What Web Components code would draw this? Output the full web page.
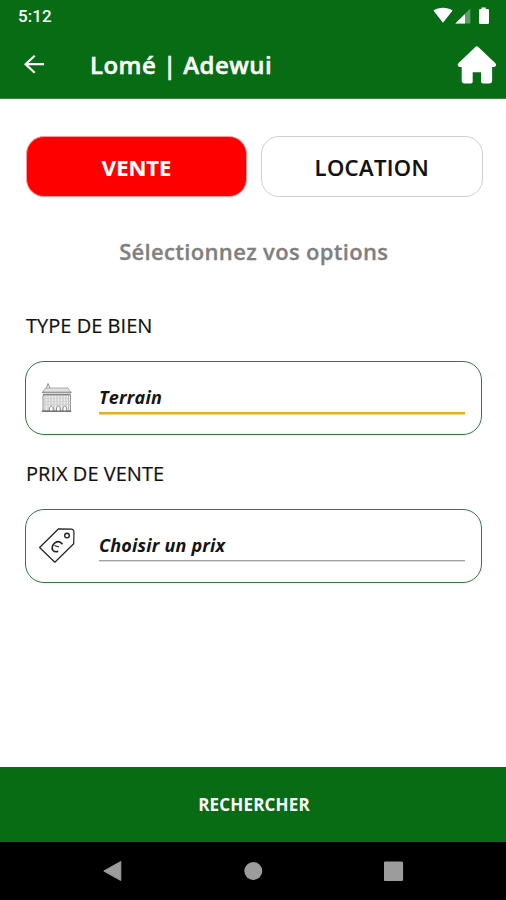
<!DOCTYPE html>
<html lang="fr">
<head>
<meta charset="utf-8">
<title>Lomé | Adewui</title>
<style>
  html, body { margin: 0; height: 100%; background: #fff; }
</style>
</head>
<body>
<property-search></property-search>

<script>
function define(name, html) {
  const template = document.createElement('template');
  template.innerHTML = html;
  customElements.define(name, class extends HTMLElement {
    constructor() {
      super();
      this.attachShadow({ mode: 'open' }).append(template.content.cloneNode(true));
    }
  });
}

define('status-bar', `
<style>
  :host { display: flex; height: 32px; box-sizing: border-box; padding: 0 16px 0 18px; justify-content: space-between; align-items: center;
    font: 500 17px/32px Roboto, sans-serif; color: #fff; }
  span { letter-spacing: .1px; }
  svg { display: block; }
</style>
<span>5:12</span>
<svg width="57" height="18" viewBox="433 6 57 18" fill="#fff">
  <path d="M433.4 9.500C438.8 5.900 447.2 5.900 452.6 9.500L443 21.800Z"/>
  <path d="M455.300 22.600L470.300 7.600V22.600Z" fill-opacity=".35"/>
  <path d="M455.300 22.600L465 12.900V22.600Z"/>
  <path d="M481.400 6.500h4.400v1.600h1.900q1.300 0 1.300 1.300v12.300q0 1.300-1.300 1.300h-7.400q-1.300 0-1.300-1.300V9.400q0-1.300 1.300-1.300h1.100z"/>
</svg>`);

define('app-bar', `
<style>
  :host { display: grid; grid-template-columns: 66px 1fr 40px; height: 66px; align-items: center; padding: 0 9px 0 24px; color: #fff; }
  h1 { margin: 0; font: 600 24px/32px "Open Sans", sans-serif; letter-spacing: .45px; white-space: nowrap; -webkit-text-stroke: .5px #fff; }
  svg { display: block; }
</style>
<svg width="22" height="20" viewBox="0 0 22 20" fill="none" stroke="#fff" stroke-width="2.200"><path d="M20 9.200H1.800M10.700.8L1.600 9.200L10.700 17.800"/></svg>
<h1><slot></slot></h1>
<svg width="40" height="40" viewBox="457 45 40 40" fill="#fff"><path d="M475.600 46.700q1.200-1 2.400 0l17.200 16.200q2.200 2.900-.7 4.100h-2.400v13.500q0 3-3 3h-6.200q-1.800 0-1.800-1.800v-9.400h-8.400v9.400q0 1.800-1.800 1.800h-6.200q-3 0-3-3V67h-2.400q-2.900-1.200-.7-4.100z"/></svg>`);

define('choice-button', `
<style>
  :host { display: flex; flex: 1; box-sizing: border-box; height: 61px; align-items: center; justify-content: center; padding-top: 1px;
    border: 1px solid #d0d0d0; border-radius: 18px; background: #fff; color: #111; font: 600 22px/30px "Open Sans", sans-serif; }
  :host([selected]) { background: #f00; color: #fff; border-color: #ff9a9a; font-weight: 700; }
  :host([selected]) span { letter-spacing: 0; }
  span { letter-spacing: .4px; -webkit-text-stroke: .2px currentColor; }
</style>
<span><slot></slot></span>`);

define('option-field', `
<style>
  :host { display: block; }
  label { display: block; font: 400 20px/26px "Open Sans", sans-serif; color: #111; letter-spacing: .03px; -webkit-text-stroke: .2px #111; }
  .box { display: flex; box-sizing: border-box; height: 74px; margin-top: 22px; padding: 0 16px 0 10px; border: 1px solid #2f7a3a; border-radius: 19px; align-items: center; }
  .icon { width: 63px; }
  .value { flex: 1; box-sizing: border-box; height: 34px; padding-top: 5px; font: italic 700 18px/26px "Open Sans", sans-serif; letter-spacing: .19px;
    color: #151515; border-bottom: 1.500px solid #a2a2a2; box-shadow: 0 1px #ddd; transform: translateY(-2px); }
  :host([active]) .value { height: 36px; padding-top: 6px; border-bottom: 2px solid #e9ad20; box-shadow: 0 1px #f4d58a; }
</style>
<label><slot name="label"></slot></label>
<div class="box"><div class="icon"><slot name="icon"></slot></div><div class="value"><slot></slot></div></div>`);

define('house-icon', `
<style>:host, svg { display: block; }</style>
<svg width="42" height="36" viewBox="36 380 42 36" fill="none" stroke="#777" stroke-width=".8">
  <path d="M45.500 388H68L71 393H42.500Z" fill="#e2e2e2" stroke="#999"/>
  <path d="M42 392.200H71.500M43 394.500H70.500" stroke="#777"/>
  <path d="M46.500 388L48 383.500L50 388" stroke="#777"/>
  <path d="M43 395h27.500v16H43z" fill="#eee"/>
  <path d="M45 395v16M48 395v16M51 395v16M54 395v16M57 395v16M60 395v16M63 395v16M66 395v16M68.500 395v16" stroke="#aaa" stroke-width=".7"/>
  <path d="M43 398.500h27.500M43 401.500h27.500M43 404.500h27.500" stroke="#ccc" stroke-width=".7"/>
  <path d="M49.500 411v-3.500q1.800-3 3.600 0v3.500M56.500 411v-3.500q1.800-3 3.600 0v3.500M63 411v-3.500q1.800-3 3.600 0v3.500" fill="#fff" stroke="#777"/>
  <path d="M41.800 411.200h29.500" stroke="#666" stroke-width="1.300"/>
</svg>`);

define('price-icon', `
<style>:host, svg { display: block; }</style>
<svg width="42" height="38" viewBox="36 527 42 38" fill="none" stroke="#222" stroke-width="1.200" stroke-linejoin="round">
  <path d="M58.600 528.800L71.800 529.200Q74 529.800 74 532L73.700 543.800L54.800 562.200L39.600 547.500Z"/>
  <circle cx="67" cy="535.600" r="2.300" stroke-width="1.400"/>
  <path d="M62.500 544.300Q59.200 540 55.200 542.700Q50.500 546.500 53 550.500Q55.200 552.600 58.200 551.300" stroke-width="1.600"/>
  <path d="M54.500 545.500l4.500 1.500" stroke-width="1.300"/>
</svg>`);

define('search-button', `
<style>
  :host { display: flex; height: 75px; align-items: center; justify-content: center; background: #086c14; color: #fff; font: 700 17px/24px "Open Sans", sans-serif; padding-left: 2px; }
  span { letter-spacing: .18px; }
</style>
<span><slot></slot></span>`);

define('navigation-bar', `
<style>
  :host { display: flex; height: 58px; align-items: center; justify-content: space-between; box-sizing: border-box; padding: 0 102px; background: #000; }
  svg { display: block; }
</style>
<svg width="20" height="22" viewBox="0 0 20 22" fill="#9c9c9c" stroke="#9c9c9c" stroke-width="1" stroke-linejoin="round"><path d="M1.800 11L18.800 1.500V20.500Z"/></svg>
<svg width="20" height="20" viewBox="0 0 20 20" fill="#9c9c9c"><circle cx="10.300" cy="10" r="9"/></svg>
<svg width="20" height="20" viewBox="0 0 20 20" fill="#9c9c9c"><rect x="-.2" y=".5" width="19.300" height="19.500" rx="1.500"/></svg>`);

define('property-search', `
<style>
  :host { display: flex; flex-direction: column; width: 506px; height: 900px; background: #fff; }
  header { height: 98px; background: #086c14; border-bottom: 1px solid #3c7f42; }
  main { flex: 1; padding: 37px 23.500px 0 26px; }
  .choices { display: flex; gap: 14px; }
  h2 { margin: 39px 0 47px; font: 600 22px/30px "Open Sans", sans-serif; color: #808080; text-align: center; letter-spacing: .33px; white-space: nowrap; padding-right: 1px; -webkit-text-stroke: .3px #808080; }
  option-field { margin: 0 1px 25.500px -1px; }
  option-field [slot=label] { padding-left: 1px; }
</style>
<header><status-bar></status-bar><app-bar>Lomé | Adewui</app-bar></header>
<main>
  <div class="choices"><choice-button selected>VENTE</choice-button><choice-button>LOCATION</choice-button></div>
  <h2>Sélectionnez vos options</h2>
  <option-field active><span slot="label">TYPE DE BIEN</span><house-icon slot="icon"></house-icon>Terrain</option-field>
  <option-field><span slot="label">PRIX DE VENTE</span><price-icon slot="icon"></price-icon>Choisir un prix</option-field>
</main>
<search-button>RECHERCHER</search-button>
<navigation-bar></navigation-bar>`);
</script>
</body>
</html>
